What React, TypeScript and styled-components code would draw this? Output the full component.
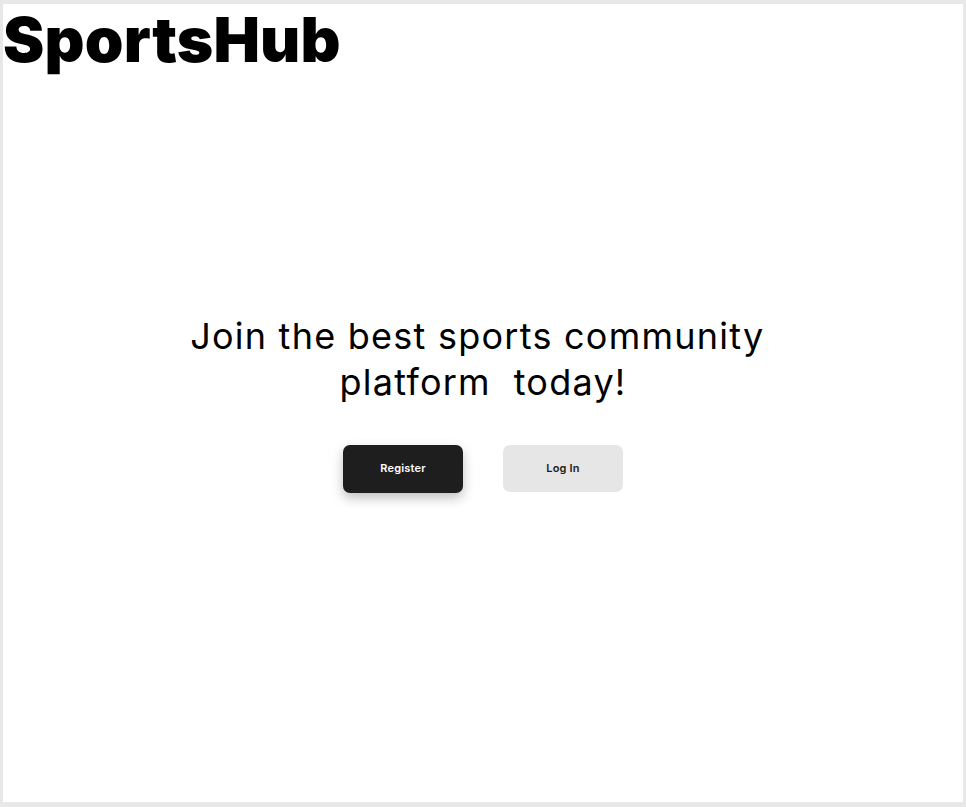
import React from "react";
import styled, { createGlobalStyle } from "styled-components";

const GlobalStyle = createGlobalStyle`
  html, body {
    margin: 0;
    padding: 0;
    background: #e8e8e8;
  }
  body {
    font-family: Inter, "Noto Sans", sans-serif;
    padding: 4px 3px 5px 3px;
  }
`;

const Panel = styled.div`
  background: #ffffff;
  height: 798px;
  display: grid;
  grid-template-rows: 1fr auto 1fr;
  box-sizing: border-box;
`;

const Header = styled.header`
  align-self: start;
  padding-left: 0;
`;

const Logo = styled.h1`
  margin: 0;
  font-family: Inter, sans-serif;
  font-weight: 900;
  font-size: 62px;
  line-height: 72px;
  letter-spacing: 0.2px;
  color: #000;
`;

const Hero = styled.main`
  display: flex;
  flex-direction: column;
  align-items: center;
  gap: 40px;
`;

const Tagline = styled.h2`
  margin: 0;
  max-width: 660px;
  font-family: Inter, sans-serif;
  font-weight: 400;
  font-size: 36px;
  line-height: 46px;
  letter-spacing: 1.25px;
  color: #000;
  text-align: center;
  white-space: break-spaces;
`;

const Actions = styled.div`
  display: flex;
  gap: 40px;
`;

const Button = styled.button<{ $primary?: boolean }>`
  width: 120px;
  height: ${(p) => (p.$primary ? "48px" : "47px")};
  padding: 0 0 2px;
  border: none;
  border-radius: 7px;
  font-family: Inter, sans-serif;
  font-size: 11px;
  font-weight: 600;
  letter-spacing: 0.2px;
  cursor: pointer;
  background: ${(p) => (p.$primary ? "#1e1e1e" : "#e6e6e6")};
  color: ${(p) => (p.$primary ? "#ffffff" : "#1e1e1e")};
  box-shadow: ${(p) => (p.$primary ? "0 5px 12px rgba(0,0,0,0.25)" : "none")};
`;

export default function App() {
  return (
    <>
      <GlobalStyle />
      <Panel>
        <Header>
          <Logo>SportsHub</Logo>
        </Header>
        <Hero>
          <Tagline>{"Join the best sports community platform  today!"}</Tagline>
          <Actions>
            <Button $primary>Register</Button>
            <Button>Log In</Button>
          </Actions>
        </Hero>
        <div />
      </Panel>
    </>
  );
}
